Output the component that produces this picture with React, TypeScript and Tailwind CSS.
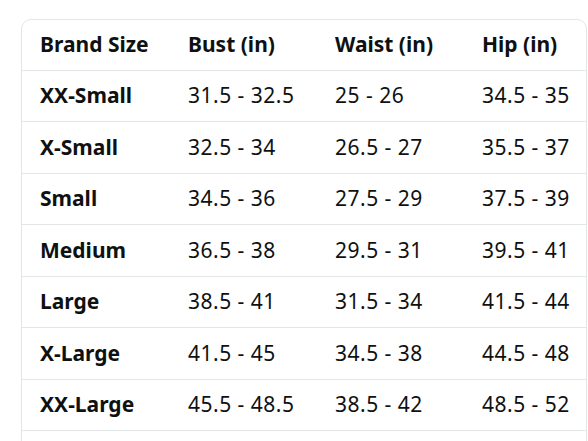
const rows = [
  ["XX-Small", "31.5 - 32.5", "25 - 26", "34.5 - 35"],
  ["X-Small", "32.5 - 34", "26.5 - 27", "35.5 - 37"],
  ["Small", "34.5 - 36", "27.5 - 29", "37.5 - 39"],
  ["Medium", "36.5 - 38", "29.5 - 31", "39.5 - 41"],
  ["Large", "38.5 - 41", "31.5 - 34", "41.5 - 44"],
  ["X-Large", "41.5 - 45", "34.5 - 38", "44.5 - 48"],
  ["XX-Large", "45.5 - 48.5", "38.5 - 42", "48.5 - 52"],
];

export default function App() {
  return (
    <div className="w-[588px] h-[441px] overflow-hidden bg-white pt-[19px] pl-[21px]" style={{ fontFamily: '"Noto Sans", "Open Sans", sans-serif' }}>
      <div className="w-[566px] h-[440px] rounded-t-[10px] border border-[#e3e6e6] text-[#0f1111] text-[21px] leading-none">
        <div className="grid grid-cols-[148px_147px_147px_1fr] h-[50.5px] items-center border-b border-[#e3e6e6] font-bold">
          <div className="pl-[18px]">Brand Size</div>
          <div className="pl-[18px]">Bust (in)</div>
          <div className="pl-[18px]">Waist (in)</div>
          <div className="pl-[18px]">Hip (in)</div>
        </div>
        {rows.map((r) => (
          <div key={r[0]} className="grid grid-cols-[148px_147px_147px_1fr] h-[51.5px] items-center border-b border-[#e3e6e6]">
            <div className="pl-[18px] font-bold">{r[0]}</div>
            <div className="pl-[18px] tracking-[0.5px]">{r[1]}</div>
            <div className="pl-[18px] tracking-[0.5px]">{r[2]}</div>
            <div className="pl-[18px] tracking-[0.5px]">{r[3]}</div>
          </div>
        ))}
      </div>
    </div>
  );
}
